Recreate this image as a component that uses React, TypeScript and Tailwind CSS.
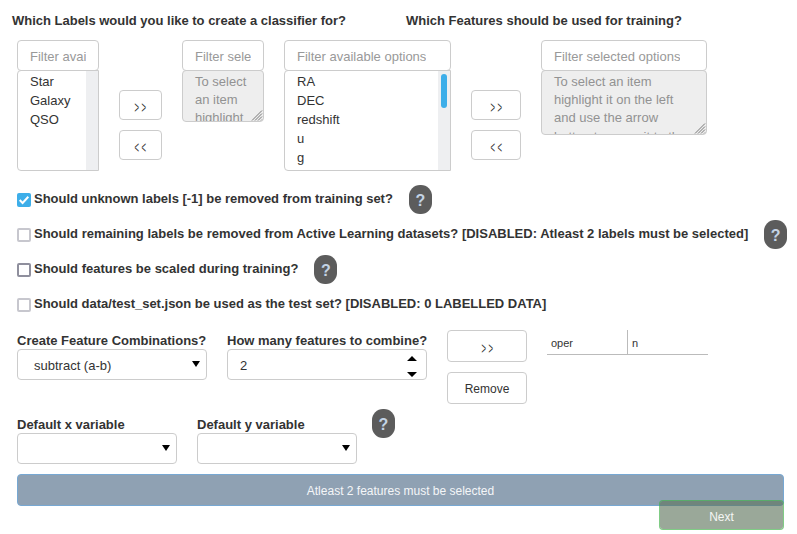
import React from "react";

const field = "rounded-[4px] border border-[#cccccc] bg-white";

function Arrows({ text, className }: { text: string; className: string }) {
  return (
    <button className={`flex items-center justify-center ${field} ${className}`}>
      <span className="inline-block translate-y-[3px] scale-x-[0.48] pl-[5px] text-[16px] leading-[18px] tracking-[5.5px]">{text}</span>
    </button>
  );
}

function Filter({ text }: { text: string }) {
  return (
    <div className={`flex h-[31px] items-center overflow-hidden px-3 ${field}`}>
      <span className="translate-y-px overflow-hidden whitespace-nowrap leading-[18px] text-[#999999]">{text}</span>
    </div>
  );
}

function List({ items, scroll }: { items: string[]; scroll?: boolean }) {
  return (
    <div className="-mt-px flex h-[101px] overflow-hidden rounded-l-[4px] border border-[#cccccc] bg-white">
      <ul className="flex-1 overflow-hidden pl-3 pt-[1px]">
        {items.map((item) => (
          <li key={item} className="h-[19px] leading-[19px]">{item}</li>
        ))}
      </ul>
      <div className="w-3 bg-[#eeeff1] px-[3px] pt-[3px]">
        {scroll && <div className="h-[34px] w-[6px] rounded-[3px] bg-[#3daee9]" />}
      </div>
    </div>
  );
}

function Placeholder({ lines, className }: { lines: string[]; className: string }) {
  return (
    <div className={`relative -mt-px overflow-hidden rounded-[4px] border border-[#cccccc] bg-[#eeeeee] pl-3 pt-[1.6px] text-[#929292] ${className}`}>
      {lines.map((line) => (
        <div key={line} className="h-[18.4px] whitespace-nowrap leading-[18.4px]">{line}</div>
      ))}
      <svg className="absolute bottom-0 right-0" width="12" height="11" viewBox="0 0 12 11" stroke="#777" strokeWidth="1" fill="none">
        <path d="M1 10.5L11 .5M4 10.5L11 3.5M7 10.5L11 6.5M10 10.5L11 9.5" />
      </svg>
    </div>
  );
}

function Help({ className = "" }: { className?: string }) {
  return (
    <span className={`flex h-[29px] w-[23px] shrink-0 items-center justify-center rounded-[11px] bg-[#5c5c5c] text-[16px] font-bold leading-none text-[#c3d3e4] ${className}`}>
      <span className="translate-y-px">?</span>
    </span>
  );
}

function CheckRow({ text, state, help, className = "" }: { text: string; state: "on" | "off" | "disabled"; help?: boolean; className?: string }) {
  const border = state === "off" ? "border-[#8f8f9d]" : "border-[#c7c7ce]";
  return (
    <div className="flex h-[35px] items-center">
      {state === "on" ? (
        <span className="flex size-[14px] shrink-0 items-center justify-center rounded-[2px] bg-[#3daee9]">
          <svg width="12" height="12" viewBox="0 0 12 12" fill="none" stroke="white" strokeWidth="2">
            <path d="M1.7 6L4.6 9L10.3 2.8" />
          </svg>
        </span>
      ) : (
        <span className={`mt-px size-[14px] shrink-0 rounded-[2px] border-2 bg-white ${border}`} />
      )}
      <b className={`-mt-[2px] ml-[3px] whitespace-nowrap ${className}`}>{text}</b>
      {help && <Help className="ml-4" />}
    </div>
  );
}

function Select({ label, value = "", className }: { label: string; value?: string; className: string }) {
  return (
    <div className={className}>
      <b className="block h-[19px] whitespace-nowrap leading-[22px]">{label}</b>
      <div className={`flex h-[31px] items-center pl-4 pr-[6px] ${field}`}>
        <span className="flex-1 translate-y-px">{value}</span>
        <svg width="8" height="6" viewBox="0 0 8 6" className="-mt-[2px]"><path d="M0 0H8L4 6Z" /></svg>
      </div>
    </div>
  );
}

export default function App() {
  return (
    <main className="relative h-[534px] w-[797px] overflow-hidden bg-white font-['Liberation_Sans',Arial,sans-serif] text-[13px] leading-[18px] text-[#333333]">
      <div className="flex h-10 items-center pl-3 pt-[2px]">
        <b className="w-[394px] whitespace-nowrap tracking-[-0.01px]">Which Labels would you like to create a classifier for?</b>
        <b className="whitespace-nowrap">Which Features should be used for training?</b>
      </div>
      <div className="flex h-[142px] items-start pl-[17px]">
        <div className="w-[82px]">
          <Filter text="Filter avai" />
          <List items={["Star", "Galaxy", "QSO"]} />
        </div>
        <div className="ml-5 mt-[50px] flex w-[43px] flex-col gap-[10px]">
          <Arrows text=">>" className="h-[30px]" />
          <Arrows text="<<" className="h-[30px]" />
        </div>
        <div className="ml-5 w-[82px]">
          <Filter text="Filter sele" />
          <Placeholder lines={["To select", "an item", "highlight"]} className="h-[52px]" />
        </div>
        <div className="ml-5 w-[167px]">
          <Filter text="Filter available options" />
          <List items={["RA", "DEC", "redshift", "u", "g"]} scroll />
        </div>
        <div className="ml-5 mt-[50px] flex w-[50px] flex-col gap-[10px]">
          <Arrows text=">>" className="h-[30px]" />
          <Arrows text="<<" className="h-[30px]" />
        </div>
        <div className="ml-5 w-[166px]">
          <Filter text="Filter selected options" />
          <Placeholder lines={["To select an item", "highlight it on the left", "and use the arrow", "button to move it to the"]} className="h-[65px]" />
        </div>
      </div>
      <div className="h-[148px] pl-[17px]">
        <CheckRow state="on" text="Should unknown labels [-1] be removed from training set?" className="tracking-[-0.015px]" help />
        <CheckRow state="disabled" text="Should remaining labels be removed from Active Learning datasets? [DISABLED: Atleast 2 labels must be selected]" help />
        <CheckRow state="off" text="Should features be scaled during training?" help />
        <CheckRow state="disabled" text="Should data/test_set.json be used as the test set? [DISABLED: 0 LABELLED DATA]" className="tracking-[-0.01px]" />
      </div>
      <div className="flex h-[84px] items-start pl-[17px]">
        <Select label="Create Feature Combinations?" value="subtract (a-b)" className="w-[190px]" />
        <div className="ml-5 w-[200px]">
          <b className="block h-[19px] whitespace-nowrap leading-[22px]">How many features to combine?</b>
          <div className={`flex h-[31px] items-center justify-between pl-3 pr-[9px] ${field}`}>
            <span className="translate-y-px">2</span>
            <svg width="10" height="21" viewBox="0 0 10 21" className="mt-[4px]"><path d="M0 5L5 0L10 5ZM0 16H10L5 21Z" /></svg>
          </div>
        </div>
        <div className="ml-5 flex w-20 flex-col gap-[10px]">
          <Arrows text=">>" className="h-8" />
          <button className={`flex h-8 items-center justify-center text-[12px] ${field}`}><span className="translate-y-px">Remove</span></button>
        </div>
        <div className="ml-5 flex h-[25px] w-[161px] border-b border-[#bbbbbb] text-[11px] leading-[26px]">
          <span className="w-[81px] border-r border-[#bbbbbb] pl-1">oper</span>
          <span className="pl-1">n</span>
        </div>
      </div>
      <div className="flex h-[60px] items-start gap-5 pl-[17px]">
        <Select label="Default x variable" className="w-40" />
        <Select label="Default y variable" className="w-40" />
        <Help className="-ml-[5px] -mt-[5px]" />
      </div>
      <button className="ml-[17px] flex h-8 w-[767px] items-center justify-center rounded-[4px] border border-[#77a8d3] bg-[#8fa1b3] text-[12px] text-[#f4f6f8]">
        <span className="translate-y-px">Atleast 2 features must be selected</span>
      </button>
      <button className="absolute left-[659px] top-[500px] flex h-[30px] w-[125px] items-center justify-center rounded-[4px] border border-[#3cb043a6] bg-[#5d745c9f] bg-clip-padding text-[12px] leading-[18px] text-[#f4f6f4]">
        <span className="translate-y-[2px]">Next</span>
      </button>
    </main>
  );
}
